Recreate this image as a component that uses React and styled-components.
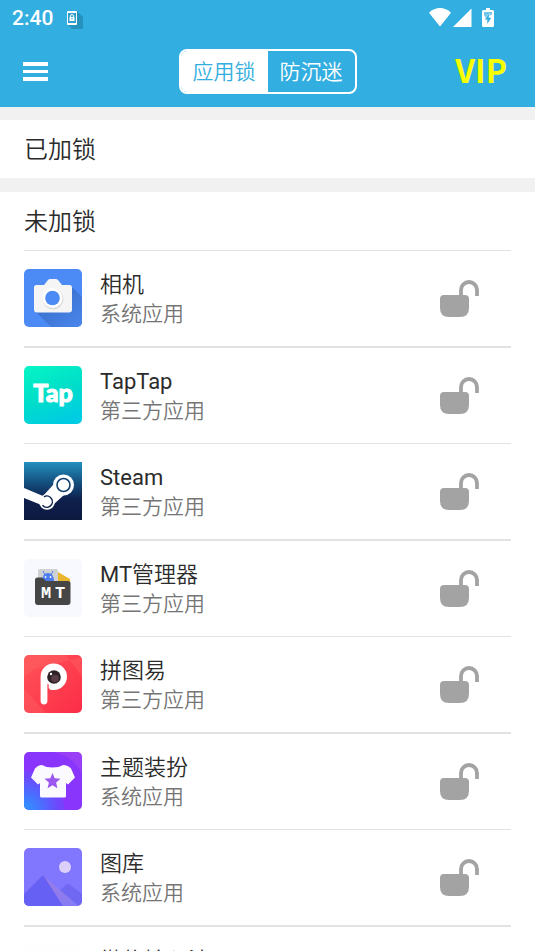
import React, { useId, useState } from 'react';
import styled, { createGlobalStyle } from 'styled-components';

//===================================================
// ================ Global styles ===================
//===================================================

const GlobalStyle = createGlobalStyle`
  * {
    box-sizing: border-box;
  }
  body {
    margin: 0;
    background: #fff;
    color: #2b2b2b;
    font-family: Roboto, "Noto Sans CJK SC DemiLight", "Noto Sans CJK SC", sans-serif;
  }
  button {
    font-family: inherit;
    cursor: pointer;
  }
`;

//===================================================
// ================ Define Wrappers =================
//===================================================

const Screen = styled.div`
  display: flex;
  flex-direction: column;
  height: 100vh;
`;

const Header = styled.header`
  flex: none;
  background: #33aee0;
  color: #fff;
`;

const StatusBar = styled.div`
  display: flex;
  align-items: center;
  justify-content: space-between;
  height: 36px;
  padding: 0 41px 0 12px;
`;

const StatusGroup = styled.div`
  display: flex;
  align-items: center;
  gap: ${props => props.$gap}px;
`;

const Clock = styled.span`
  font-size: 21px;
  font-weight: 500;
  line-height: 26px;
`;

const Toolbar = styled.div`
  display: grid;
  grid-template-columns: 1fr auto 1fr;
  align-items: center;
  height: 71px;
  padding: 0 23px;
`;

// The header stays in place, only the lists scroll
const Main = styled.main`
  display: flex;
  flex-direction: column;
  flex: 1;
  gap: 14px;
  min-height: 0;
  padding-top: 13px;
  overflow-y: auto;
  scrollbar-width: none;
  background: #f1f1f1;
`;

const Section = styled.section`
  flex: none;
  padding: 0 24px;
  background: #fff;
`;

//====================================================
// ============= Define base components =============
//====================================================

const MenuButton = styled.button`
  display: flex;
  justify-self: start;
  padding: 0;
  border: 0;
  background: none;
  color: #fff;
`;

const Tabs = styled.div`
  display: flex;
  height: 45px;
  border: 2px solid #fff;
  border-radius: 8px;
  overflow: hidden;
`;

const Tab = styled.button`
  padding: 0 12px;
  border: 0;
  background: ${props => props.$active ? '#fff' : 'transparent'};
  color: ${props => props.$active ? '#33aee0' : '#fff'};
  font-size: 21px;
  font-weight: 350;
  line-height: 24px;
`;

const VipButton = styled.button`
  justify-self: end;
  padding: 0 5px 5px;
  border: 0;
  background: none;
  color: #f8ff00;
  font-family: "Noto Sans CJK SC", sans-serif;
  font-size: 32px;
  font-weight: 700;
  line-height: 40px;
`;

const SectionTitle = styled.h2`
  margin: 0;
  padding-top: 3px;
  font-size: 24px;
  font-weight: 350;
  line-height: 55px;
`;

const AppList = styled.ul`
  margin: 0;
  padding: 0;
  list-style: none;
  border-top: 1px solid #e2e2e2;
`;

const AppItem = styled.li`
  display: flex;
  align-items: center;
  gap: 18px;
  padding: 15px 32px 16px 0;
  border-bottom: 1px solid #e2e2e2;
  &:nth-child(odd) {
    border-bottom-width: 2px;
  }
`;

const IconBox = styled.div`
  flex: none;
  width: 58px;
  height: 58px;
  border-radius: ${props => props.$square ? 0 : 5}px;
  overflow: hidden;
  svg {
    display: block;
  }
`;

const AppText = styled.div`
  flex: 1;
  min-width: 0;
  padding: 4px 0 2px;
`;

const AppName = styled.div`
  font-size: 22px;
  line-height: 30px;
`;

const AppKind = styled.div`
  color: #757575;
  font-size: 21px;
  font-weight: 350;
  line-height: 28px;
`;

const LockButton = styled.button`
  display: flex;
  padding: 0;
  border: 0;
  background: none;
`;

//=======================================================
// =================== Status icons =====================
//=======================================================

const PhoneLockIcon = () => (
  <svg width="17" height="22" viewBox="0 -4 17 22">
    <path d="M10 0l6 6v12H5L0 13z" fill="#2592bd" />
    <rect width="10" height="14" rx="1" fill="#fff" />
    <rect x="1" y="2" width="8" height="10" fill="#2f9fcc" />
    <path d="M3.5 6V5a1.5 1.5 0 0 1 3 0v1" fill="none" stroke="#fff" />
    <rect x="2.5" y="6" width="5" height="4" fill="#fff" />
    <rect x="4.5" y="7" width="1" height="1.5" fill="#2f9fcc" />
  </svg>
);

const WifiIcon = () => (
  <svg width="22" height="20" viewBox="0 0 22 20">
    <path d="M0 4.7C6.5-1.5 15.5-1.5 22 4.7L11 18.5z" fill="#fff" />
  </svg>
);

const SignalIcon = () => (
  <svg width="19" height="20" viewBox="0 0 19 20">
    <path d="M18.5 0.5v18.5H0z" fill="#fff" />
  </svg>
);

const BatteryIcon = () => (
  <svg width="12" height="20" viewBox="0 0 12 20">
    <path d="M4 0h4v2h2.5q1.5 0 1.5 1.5v14q0 1.5-1.5 1.5h-9Q0 19 0 17.5v-14Q0 2 1.5 2H4z" fill="#fff" />
    <path d="M2 4h8v2.5L7.5 8V5L3.5 9.5 2 7z" fill="#33aee0" opacity="0.7" />
    <path d="M7 5.5L2.8 11.5h2.5v4.5l4-6.2H6.8z" fill="#33aee0" />
  </svg>
);

const MenuIcon = () => (
  <svg width="25" height="19" viewBox="0 0 25 19" fill="#fff">
    <rect width="25" height="4" />
    <rect y="8" width="25" height="3" />
    <rect y="15" width="25" height="4" />
  </svg>
);

const UnlockIcon = () => (
  <svg width="39" height="37" viewBox="0 0 39 37">
    <path d="M21 16V10a8 8 0 0 1 16 0v6" fill="none" stroke="#a3a3a3" strokeWidth="3.8" />
    <path d="M4 15h21q4 0 4 4v9q0 9-9 9H9q-9 0-9-9v-9q0-4 4-4z" fill="#a3a3a3" />
  </svg>
);

//=======================================================
// ===================== App icons ======================
//=======================================================

const CameraIcon = ({ id }) => (
  <svg width="58" height="58" viewBox="0 0 58 58">
    <defs>
      <linearGradient id={id} x1="0" y1="0" x2="1" y2="1">
        <stop offset="0.4" stopColor="#3d74d2" />
        <stop offset="1" stopColor="#4a86ec" />
      </linearGradient>
    </defs>
    <rect width="58" height="58" fill="#4c8bf5" />
    <path d="M47 17l11 11v30H27L11 42z" fill={`url(#${id})`} />
    <path d="M12.5 16H20l4-5q1-1 2-1h6q1 0 2 1l4 5h7.5q2.5 0 2.5 2.5v22q0 3-3 3H13q-3 0-3-3v-22q0-2.5 2.5-2.5z" fill="#f5f5f5" />
    <circle cx="29" cy="30" r="10.5" fill="#dcdcdc" />
    <circle cx="28.5" cy="29" r="10" fill="#fff" />
    <circle cx="28.5" cy="29" r="7.3" fill="#4c8bf5" />
  </svg>
);

const TapTapIcon = ({ id }) => (
  <svg width="58" height="58" viewBox="0 0 58 58">
    <defs>
      <linearGradient id={id} x1="0.2" y1="0" x2="0.6" y2="1">
        <stop offset="0" stopColor="#05f3c5" />
        <stop offset="0.5" stopColor="#00dec9" />
        <stop offset="1" stopColor="#00cce3" />
      </linearGradient>
    </defs>
    <rect width="58" height="58" fill={`url(#${id})`} />
    <text
      x="29"
      y="36"
      textAnchor="middle"
      fill="#fff"
      stroke="#fff"
      strokeWidth="1"
      strokeLinejoin="round"
      fontFamily="Lato, sans-serif"
      fontSize="25"
      fontWeight="900">
      Tap
    </text>
  </svg>
);

const SteamIcon = ({ id }) => (
  <svg width="58" height="58" viewBox="0 0 58 58">
    <defs>
      <linearGradient id={id} x1="0" y1="0" x2="0" y2="1">
        <stop offset="0" stopColor="#238fbd" />
        <stop offset="0.35" stopColor="#14507f" />
        <stop offset="0.65" stopColor="#0e1f4c" />
        <stop offset="1" stopColor="#0d1a3f" />
      </linearGradient>
    </defs>
    <rect width="58" height="58" fill={`url(#${id})`} />
    <path d="M0 26L19 34l10-11L40 33 30 42 24 46 15 42 0 36z" fill="#fff" />
    <circle cx="39.5" cy="23" r="10.5" fill="#fff" />
    <circle cx="23" cy="40" r="7.8" fill="#fff" />
    <circle cx="39.5" cy="23" r="6.5" fill="none" stroke="#12406f" strokeWidth="1.6" />
    <path d="M20 34.8a5.6 5.6 0 1 1-1.5 8.5" fill="none" stroke="#0e2350" strokeWidth="1.5" />
  </svg>
);

const MtIcon = () => (
  <svg width="58" height="58" viewBox="0 0 58 58">
    <rect width="58" height="58" fill="#f8f9fe" />
    <path d="M14 12q0-2 2-2h16q2 0 2 2v10H14z" fill="#cfd1d3" />
    <path d="M34 13l12 7v4H34z" fill="#e9b52c" />
    <path d="M18 22a6 8 0 0 1 12 0z" fill="#4b7cf0" />
    <path d="M19 12l2 4m8-4l-2 4" stroke="#4b7cf0" />
    <circle cx="21.5" cy="18" r="0.9" fill="#fff" />
    <circle cx="26.5" cy="18" r="0.9" fill="#fff" />
    <path d="M11 21q0-2.5 2.5-2.5H18l4 3.5h22q2.5 0 2.5 2.5V43q0 3-3 3h-29.5q-3 0-3-3z" fill="#464646" />
    <g fill="#fff" fontFamily="Liberation Mono, monospace" fontSize="17" fontWeight="700">
      <text x="17" y="39">M</text>
      <text x="31" y="39">T</text>
    </g>
  </svg>
);

const PintuIcon = ({ id }) => (
  <svg width="58" height="58" viewBox="0 0 58 58">
    <defs>
      <linearGradient id={id} x1="0" y1="0" x2="1" y2="1">
        <stop offset="0" stopColor="#ff5458" />
        <stop offset="1" stopColor="#fc2c47" />
      </linearGradient>
    </defs>
    <rect width="58" height="58" fill={`url(#${id})`} />
    <path d="M0 0h58v2L10 14 0 22zM0 34l22 24H0zM42 0l16 22V0z" fill="#ff6a68" opacity="0.35" />
    <path d="M20 46V22a9.8 9.8 0 1 1 9.8 9.5H28" fill="none" stroke="#fff" strokeWidth="6.8" strokeLinecap="round" />
    <circle cx="30" cy="22" r="9.5" fill="#fff" />
    <circle cx="30" cy="22" r="6.8" fill="#2e2226" />
    <circle cx="31" cy="23.5" r="3.8" fill="#5a3b48" />
    <circle cx="27" cy="19" r="1.2" fill="#fff" />
  </svg>
);

const ThemeIcon = ({ id }) => (
  <svg width="58" height="58" viewBox="0 0 58 58">
    <defs>
      <radialGradient id={id} cx="0" cy="1" r="0.9">
        <stop offset="0" stopColor="#2b98ff" />
        <stop offset="0.5" stopColor="#4b6dff" />
        <stop offset="1" stopColor="#7443fb" />
      </radialGradient>
    </defs>
    <rect width="58" height="58" fill="#8a35fc" />
    <path d="M28 0q22 4 30 22V0z" fill="#a346f2" opacity="0.6" />
    <path d="M0 18q36 6 41 40H0z" fill={`url(#${id})`} />
    <path d="M18 13q4 2.5 10.5 2.5T39 13q5 0 8 3.5l4 9-7 7-2-1.5v13q0 1.5-1.5 1.5h-23Q16 45.5 16 44V31l-2 1.5-7-7 4-9q3-3.5 7-3.5z" fill="#fafaff" />
    <path d="M28.5 21l2.2 5.3 5.8.5-4.4 3.8 1.3 5.7-4.9-3-4.9 3 1.3-5.7-4.4-3.8 5.8-.5z" fill="#9b57ee" />
  </svg>
);

const GalleryIcon = ({ id }) => (
  <svg width="58" height="58" viewBox="0 0 58 58">
    <defs>
      <linearGradient id={id} x1="0" y1="0" x2="1" y2="1">
        <stop offset="0" stopColor="#9d7ce0" />
        <stop offset="1" stopColor="#847af7" />
      </linearGradient>
    </defs>
    <rect width="58" height="58" fill="#8177fe" />
    <circle cx="41" cy="19" r="6" fill="#dcd0fb" />
    <path d="M28 49l15-13q1-.7 2 0l13 10v12H34z" fill="#7068f2" />
    <path d="M19 28l36 30H35z" fill={`url(#${id})`} />
    <path d="M0 46l18-18q1-.7 2 .5L39 58H0z" fill="#6660f4" />
  </svg>
);

const BlankIcon = () => (
  <svg width="58" height="58" viewBox="0 0 58 58">
    <rect width="58" height="58" fill="#fefefe" />
  </svg>
);

//=======================================================
// =============== Define compound components ===========
//=======================================================

const AppRow = ({ app, locked, onToggle }) => {
  const id = useId();
  const Icon = app.icon;
  return (
    <AppItem>
      <IconBox $square={app.square}>
        <Icon id={id} />
      </IconBox>
      <AppText>
        <AppName>{app.name}</AppName>
        <AppKind>{app.kind}</AppKind>
      </AppText>
      <LockButton aria-label={`加锁 ${app.name}`} aria-pressed={locked} onClick={onToggle}>
        <UnlockIcon />
      </LockButton>
    </AppItem>
  );
};

const apps = [
  { name: '相机', kind: '系统应用', icon: CameraIcon },
  { name: 'TapTap', kind: '第三方应用', icon: TapTapIcon },
  { name: 'Steam', kind: '第三方应用', icon: SteamIcon, square: true },
  { name: 'MT管理器', kind: '第三方应用', icon: MtIcon },
  { name: '拼图易', kind: '第三方应用', icon: PintuIcon },
  { name: '主题装扮', kind: '系统应用', icon: ThemeIcon },
  { name: '图库', kind: '系统应用', icon: GalleryIcon },
  { name: '微信输入法', kind: '第三方应用', icon: BlankIcon }
];

const tabs = ['应用锁', '防沉迷'];

export default function App() {
  const [tab, setTab] = useState(tabs[0]);
  const [locked, setLocked] = useState([]);

  const toggle = (name) => {
    setLocked(locked.includes(name) ? locked.filter(n => n !== name) : [...locked, name]);
  };

  return (
    <Screen>
      <GlobalStyle />
      <Header>
        <StatusBar>
          <StatusGroup $gap={14}>
            <Clock>2:40</Clock>
            <PhoneLockIcon />
          </StatusGroup>
          <StatusGroup $gap={10}>
            <StatusGroup $gap={2}>
              <WifiIcon />
              <SignalIcon />
            </StatusGroup>
            <BatteryIcon />
          </StatusGroup>
        </StatusBar>
        <Toolbar>
          <MenuButton aria-label='菜单'>
            <MenuIcon />
          </MenuButton>
          <Tabs>
            {tabs.map(name => (
              <Tab key={name} $active={name === tab} onClick={() => setTab(name)}>{name}</Tab>
            ))}
          </Tabs>
          <VipButton>VIP</VipButton>
        </Toolbar>
      </Header>
      <Main>
        <Section>
          <SectionTitle>已加锁</SectionTitle>
        </Section>
        <Section>
          <SectionTitle>未加锁</SectionTitle>
          <AppList>
            {apps.map(app => (
              <AppRow
                key={app.name}
                app={app}
                locked={locked.includes(app.name)}
                onToggle={() => toggle(app.name)} />
            ))}
          </AppList>
        </Section>
      </Main>
    </Screen>
  );
}
